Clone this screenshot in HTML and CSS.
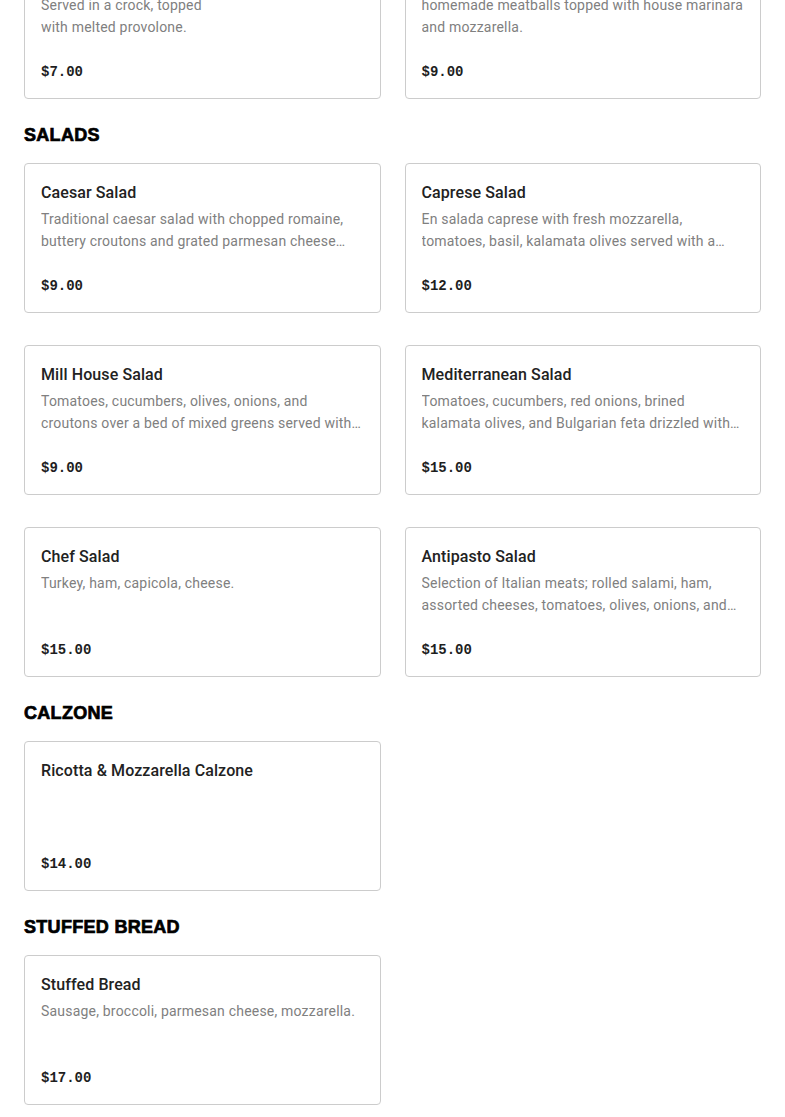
FILE: index.html
```html
<!DOCTYPE html>
<html lang="en">
<head>
<meta charset="utf-8">
<title>Menu</title>
<link rel="stylesheet" href="styles.css">
</head>
<body>
<main class="menu">
  <section class="section section-first">
    <div class="grid">
      <div class="card">
        <div class="title">French Onion Soup</div>
        <div class="desc">Served in a crock, topped<br>with melted provolone.</div>
        <div class="price">$7.00</div>
      </div>
      <div class="card">
        <div class="title">Meatball Soup</div>
        <div class="desc">homemade meatballs topped with house marinara and mozzarella.</div>
        <div class="price">$9.00</div>
      </div>
    </div>
  </section>

  <section class="section">
    <h2 class="heading">SALADS</h2>
    <div class="grid">
      <div class="card">
        <div class="title">Caesar Salad</div>
        <div class="desc">Traditional caesar salad with chopped romaine, buttery croutons and grated parmesan cheese served with caesar dressing.</div>
        <div class="price">$9.00</div>
      </div>
      <div class="card">
        <div class="title">Caprese Salad</div>
        <div class="desc">En salada caprese with fresh mozzarella, tomatoes, basil, kalamata olives served with a balsamic glaze.</div>
        <div class="price">$12.00</div>
      </div>
      <div class="card">
        <div class="title">Mill House Salad</div>
        <div class="desc">Tomatoes, cucumbers, olives, onions, and croutons over a bed of mixed greens served with your choice of dressing.</div>
        <div class="price">$9.00</div>
      </div>
      <div class="card">
        <div class="title">Mediterranean Salad</div>
        <div class="desc">Tomatoes, cucumbers, red onions, brined kalamata olives, and Bulgarian feta drizzled with olive oil.</div>
        <div class="price">$15.00</div>
      </div>
      <div class="card">
        <div class="title">Chef Salad</div>
        <div class="desc">Turkey, ham, capicola, cheese.</div>
        <div class="price">$15.00</div>
      </div>
      <div class="card">
        <div class="title">Antipasto Salad</div>
        <div class="desc">Selection of Italian meats; rolled salami, ham, assorted cheeses, tomatoes, olives, onions, and peppers.</div>
        <div class="price">$15.00</div>
      </div>
    </div>
  </section>

  <section class="section">
    <h2 class="heading">CALZONE</h2>
    <div class="grid">
      <div class="card">
        <div class="title">Ricotta &amp; Mozzarella Calzone</div>
        <div class="desc"></div>
        <div class="price">$14.00</div>
      </div>
    </div>
  </section>

  <section class="section">
    <h2 class="heading">STUFFED BREAD</h2>
    <div class="grid">
      <div class="card">
        <div class="title">Stuffed Bread</div>
        <div class="desc">Sausage, broccoli, parmesan cheese, mozzarella.</div>
        <div class="price">$17.00</div>
      </div>
    </div>
  </section>
</main>
</body>
</html>
```
FILE: styles.css
```css
* { box-sizing: border-box; }
html, body { margin: 0; padding: 0; background: #fff; }
body { font-family: Roboto, "Liberation Sans", sans-serif; color: #222; }

.menu { padding: 0 24px 24px; }

.section { padding-top: 24px; }
.section-first { padding-top: 0; margin-top: -51px; }

.heading {
  margin: 0 0 16px;
  font-family: "Liberation Sans", Arial, sans-serif;
  font-weight: 700;
  font-size: 18px;
  line-height: 24px;
  color: #000;
  letter-spacing: 0.3px;
  -webkit-text-stroke: 0.7px #000;
}

.grid {
  display: grid;
  grid-template-columns: 1fr 1fr;
  column-gap: 24px;
  row-gap: 32px;
}

.card {
  display: flex;
  flex-direction: column;
  height: 150px;
  border: 1px solid #cccccc;
  border-radius: 4px;
  padding: 17px 16px 16px;
}

.title {
  font-family: Roboto, "Liberation Sans", sans-serif;
  font-size: 16px;
  line-height: 24px;
  font-weight: 500;
  color: #222;
  letter-spacing: 0.1px;
}

.desc {
  margin-top: 3px;
  height: 44px;
  font-family: Roboto, "Liberation Sans", sans-serif;
  font-size: 14px;
  line-height: 22px;
  color: #808080;
  letter-spacing: 0.2px;
  display: -webkit-box;
  -webkit-line-clamp: 2;
  -webkit-box-orient: vertical;
  overflow: hidden;
}

.price {
  margin-top: auto;
  font-family: "Liberation Mono", "DejaVu Sans Mono", monospace;
  font-weight: 700;
  font-size: 14px;
  line-height: 20px;
  color: #1e1e1e;
}
```
